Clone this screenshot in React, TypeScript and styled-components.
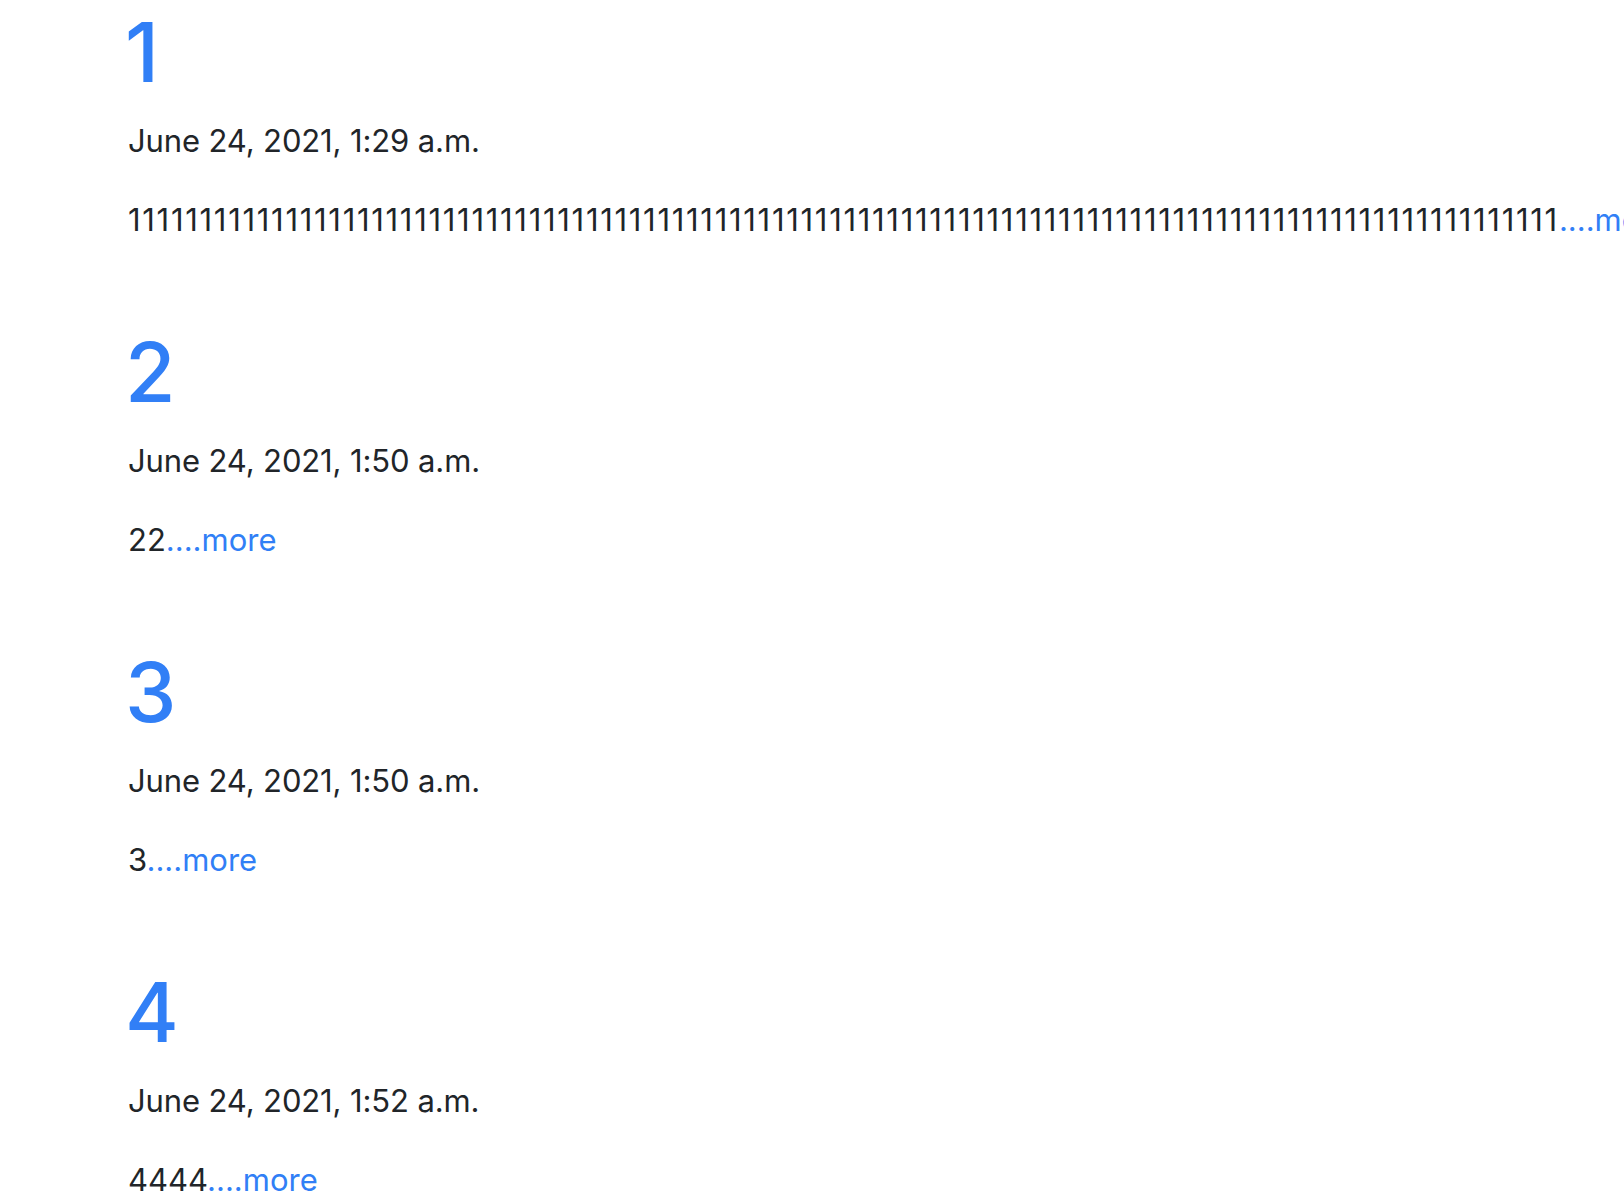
import React from "react";
import styled, { createGlobalStyle } from "styled-components";

const GlobalStyle = createGlobalStyle`
  html, body {
    margin: 0;
    padding: 0;
    background: #ffffff;
    overflow: hidden;
  }
  body {
    font-family: Inter, "Noto Sans", "Liberation Sans", sans-serif;
    color: #212529;
  }
`;

const Page = styled.main`
  padding: 12px 0 0 128px;
  overflow: hidden;
`;

const Entry = styled.article`
  margin-bottom: 89px;
`;

const Title = styled.h1`
  margin: 0 0 24px -3px;
  font-size: 82px;
  line-height: 82px;
  font-weight: 500;
  color: #317ff6;
`;

const DateLine = styled.p`
  margin: 0 0 33px;
  font-size: 31px;
  line-height: 46px;
  font-weight: 400;
  letter-spacing: -0.12px;
  color: #212529;
`;

const Body = styled.p`
  margin: 0;
  font-size: 31px;
  line-height: 46px;
  font-weight: 400;
  color: #212529;
  white-space: nowrap;
`;

const Excerpt = styled.span<{ $wide?: boolean }>`
  letter-spacing: ${(p) => (p.$wide ? "1.7px" : "0")};
`;

const More = styled.a`
  color: #317ff6;
  text-decoration: none;
`;

const posts = [
  { title: "1", date: "June 24, 2021, 1:29 a.m.", body: "1".repeat(100), wide: true },
  { title: "2", date: "June 24, 2021, 1:50 a.m.", body: "22", wide: false },
  { title: "3", date: "June 24, 2021, 1:50 a.m.", body: "3", wide: false },
  { title: "4", date: "June 24, 2021, 1:52 a.m.", body: "4444", wide: false },
];

export default function App() {
  return (
    <>
      <GlobalStyle />
      <Page>
        {posts.map((p) => (
          <Entry key={p.title}>
            <Title>{p.title}</Title>
            <DateLine>{p.date}</DateLine>
            <Body>
              <Excerpt $wide={p.wide}>{p.body}</Excerpt>
              <More href="#">....more</More>
            </Body>
          </Entry>
        ))}
      </Page>
    </>
  );
}
